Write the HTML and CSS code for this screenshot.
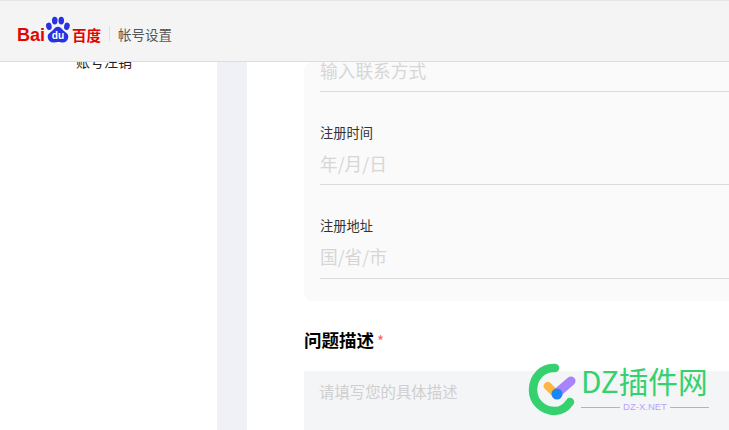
FILE: index.html
```html
<!DOCTYPE html>
<html lang="zh">
<head>
<meta charset="utf-8">
<title>帐号设置</title>
<link rel="stylesheet" href="styles.css">
</head>
<body>
<header class="topbar">
  <div class="logo">
    <span class="logo-bai">Bai</span>
    <svg class="paw" width="26" height="28" viewBox="0 0 28 30">
      <ellipse cx="4.200" cy="11" rx="3" ry="4" fill="#2932e1" transform="rotate(-12 4.200 11)"/>
      <ellipse cx="10.500" cy="4.800" rx="3" ry="4.200" fill="#2932e1"/>
      <ellipse cx="17.500" cy="4.800" rx="3" ry="4.200" fill="#2932e1"/>
      <ellipse cx="23.600" cy="11" rx="3" ry="4" fill="#2932e1" transform="rotate(12 23.600 11)"/>
      <path d="M14 11.500c3.500 0 4.500 3.500 7.500 5.500 3 2 4 4 3.500 6-.6 4-3.500 6-7 5.500-2-.3-2.500-.5-4-.5s-2 .2-4 .5c-3.500.5-6.400-1.500-7-5.500-.5-2 .5-4 3.500-6 3-2 4-5.500 7-5.500z" fill="#2932e1"/>
      <text x="14" y="25" class="paw-text">du</text>
    </svg>
    <span class="logo-cn">百度</span>
  </div>
  <span class="divider"></span>
  <span class="title">帐号设置</span>
</header>
<div class="page">
  <aside class="sidebar"><a class="nav-link">账号注销</a></aside>
  <div class="gutter"></div>
  <main class="content">
    <section class="panel">
      <div class="field field-first"><div class="input">输入联系方式</div></div>
      <div class="field"><label class="label">注册时间</label><div class="input">年/月/日</div></div>
      <div class="field field-last"><label class="label">注册地址</label><div class="input">国/省/市</div></div>
    </section>
    <h2 class="heading">问题描述<span class="star">*</span></h2>
    <div class="textarea">请填写您的具体描述</div>
  </main>
</div>
<div class="watermark">
  <svg class="wm-icon" width="50" height="54" viewBox="0 0 50 54">
    <path d="M28 6C16 5 6 15 6 28c0 12 10 21 22 21 6 0 11-3 15-9" fill="none" stroke="#35d16f" stroke-width="8.500" stroke-linecap="round"/>
    <path d="M20.700 24L28 31" stroke="#fdb740" stroke-width="8" stroke-linecap="round"/>
    <path d="M30 31l14-12" stroke="#a883fa" stroke-width="9" stroke-linecap="round"/>
    <circle cx="30" cy="32" r="5.500" fill="#1d86f5"/>
  </svg>
  <div class="wm-text">
    <div class="wm-name">DZ插件网</div>
    <div class="wm-sub"><span class="wm-line"></span><span class="wm-url">DZ-X.NET</span><span class="wm-line"></span></div>
  </div>
</div>
</body>
</html>
```
FILE: styles.css
```css
* { box-sizing: border-box; }
html, body { margin: 0; height: 100%; overflow: hidden; }
body {
  position: relative;
  display: flex;
  flex-direction: column;
  background: #fff;
  font-family: "Noto Sans CJK SC", "Liberation Sans", sans-serif;
}
.topbar {
  height: 62px;
  flex: none;
  display: flex;
  align-items: center;
  padding: 5px 0 0 17px;
  background: #f4f4f4;
  border-top: 1px solid #e4e4e8;
  border-bottom: 1px solid #dcdcdc;
  position: relative;
  z-index: 1;
}
.logo { display: flex; align-items: center; height: 30px; width: 84px; }
.logo-bai { flex: none; width: 27px; font: bold 18px/20px "Liberation Sans", sans-serif; color: #e10601; margin-top: 3px; }
.paw { flex: none; margin: -8px 0 0 1px; }
.paw-text { font: bold 11px "Liberation Sans", sans-serif; fill: #fff; text-anchor: middle; }
.logo-cn { flex: none; font-size: 14.500px; font-weight: 700; line-height: 20px; color: #e10601; margin: 3px 0 0 1px; white-space: nowrap; }
.divider { flex: none; width: 1px; height: 15px; background: #e0e0e0; margin: 0 8px 0 8px; }
.title { font-size: 13.500px; line-height: 20px; color: #555; }
.page { flex: 1; display: flex; min-height: 0; }
.sidebar { width: 217px; flex: none; background: #fff; overflow: hidden; }
.nav-link { display: block; margin: -8px 0 0 76px; font-size: 14px; line-height: 14px; color: #222; }
.gutter { width: 30px; flex: none; background: #f0f1f6; }
.content { flex: 1; min-width: 0; padding-left: 57px; overflow: hidden; }
.panel { background: #fafafa; border-radius: 8px 0 0 8px; padding: 0 0 22px 16px; height: 239px; }
.field { border-bottom: 1px solid #dcdcdc; padding-top: 32px; height: 93px; }
.field-last { height: 94px; }
.field-first { padding-top: 0; height: 30px; overflow: hidden; }
.label { display: block; font-size: 13.250px; line-height: 18px; color: #333; }
.input { font-size: 17.700px; line-height: 26px; color: #d6d6d6; margin-top: 8px; }
.field-first .input { margin-top: -5px; }
.heading { margin: 26px 0 0; font-size: 17.500px; line-height: 26px; font-weight: 700; color: #000; }
.star { font-size: 15px; font-weight: 400; color: #f0645f; margin-left: 3px; }
.textarea { margin-top: 17px; height: 80px; padding: 10px 15px; background: #f4f5f7; font-size: 15.400px; line-height: 20px; color: #cfcfcf; }
.watermark { position: absolute; left: 527px; top: 362px; display: flex; align-items: flex-start; z-index: 2; }
.wm-icon { flex: none; }
.wm-text { margin-left: 4px; width: 128px; }
.wm-name { font-size: 29.700px; line-height: 36px; margin-top: 1px; color: #35d16f; white-space: nowrap; }
.wm-sub { display: flex; align-items: center; gap: 3px; margin-top: 2px; }
.wm-line { flex: 1; height: 1px; background: #b9a3fb; }
.wm-url { font: 9.500px/12px "Liberation Sans", sans-serif; color: #b9a3fb; }
```
